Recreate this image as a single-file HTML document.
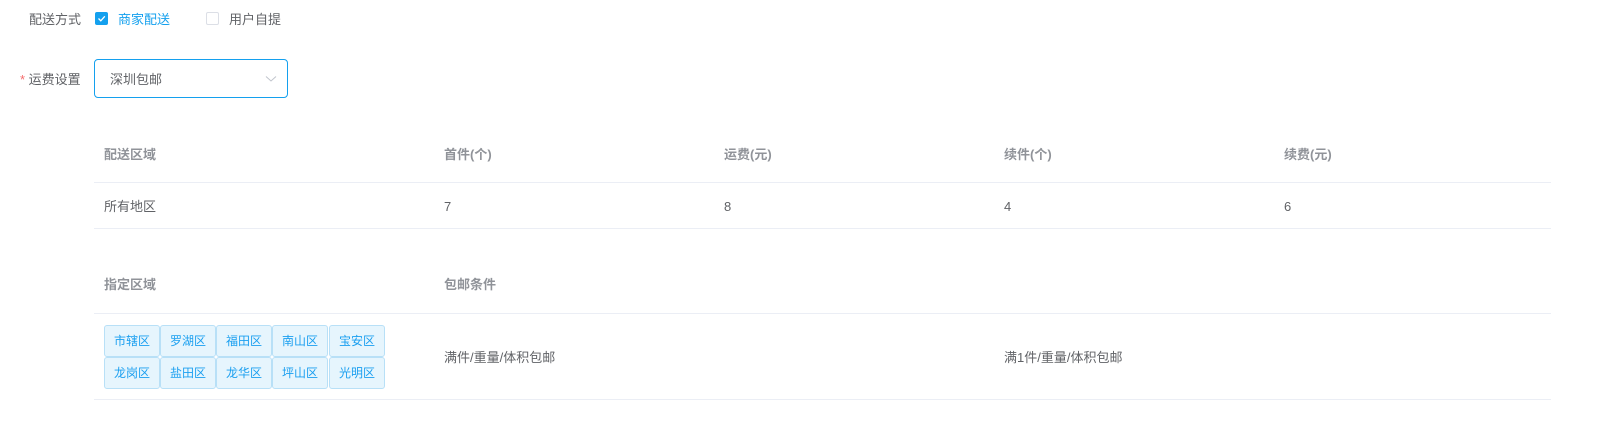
<!DOCTYPE html><html><head><meta charset="utf-8"><style>
body{margin:0;width:1615px;height:426px;background:#fff;font-family:"Liberation Sans","Noto Sans CJK SC",sans-serif;font-size:13px;line-height:16px;color:#606266;position:relative;overflow:hidden}
.a{position:absolute;white-space:nowrap}
.t{margin-top:2px}
.h{color:#909399;font-weight:bold}
.line{position:absolute;left:94px;width:1457px;height:1px;background:#ebeef5}
.tag{position:absolute;width:54px;height:30px;border:1px solid #b8e0f7;background:#e6f5fd;border-radius:3px;color:#1a9ff0;font-size:12px;line-height:30px;text-align:center}
</style></head><body>
<div class="a t" style="left:29px;top:10px">配送方式</div>
<div class="a" style="left:95px;top:12px;width:13px;height:13px;background:#14a0ee;border-radius:2px"><svg width="13" height="13" style="position:absolute;left:0;top:0"><path d="M3.5 6.5 L5.8 8.8 L9.8 4.3" stroke="#fff" stroke-width="1.3" fill="none"/></svg></div>
<div class="a t" style="left:118px;top:10px;color:#14a0ee">商家配送</div>
<div class="a" style="left:206px;top:12px;width:11px;height:11px;border:1px solid #dcdfe6;border-radius:2px"></div>
<div class="a t" style="left:229px;top:10px">用户自提</div>
<div class="a t" style="left:20px;top:70px"><span style="color:#f56c6c">*</span> 运费设置</div>
<div class="a" style="left:94px;top:59px;width:192px;height:37px;border:1px solid #14a0ee;border-radius:4px"></div>
<div class="a t" style="left:110px;top:70px">深圳包邮</div>
<svg class="a" style="left:265px;top:75px" width="12" height="8"><path d="M1 1.5 L6 6 L11 1.5" stroke="#c0c4cc" fill="none"/></svg>
<div class="a h t" style="left:104px;top:145px">配送区域</div>
<div class="a h t" style="left:444px;top:145px">首件(个)</div>
<div class="a h t" style="left:724px;top:145px">运费(元)</div>
<div class="a h t" style="left:1004px;top:145px">续件(个)</div>
<div class="a h t" style="left:1284px;top:145px">续费(元)</div>
<div class="line" style="top:182px"></div>
<div class="a t" style="left:104px;top:197px">所有地区</div>
<div class="a t" style="left:444px;top:197px">7</div>
<div class="a t" style="left:724px;top:197px">8</div>
<div class="a t" style="left:1004px;top:197px">4</div>
<div class="a t" style="left:1284px;top:197px">6</div>
<div class="line" style="top:228px"></div>
<div class="a h t" style="left:104px;top:275px">指定区域</div>
<div class="a h t" style="left:444px;top:275px">包邮条件</div>
<div class="line" style="top:313px"></div>
<div class="tag" style="left:104px;top:325px">市辖区</div>
<div class="tag" style="left:160px;top:325px">罗湖区</div>
<div class="tag" style="left:216px;top:325px">福田区</div>
<div class="tag" style="left:272px;top:325px">南山区</div>
<div class="tag" style="left:329px;top:325px">宝安区</div>
<div class="tag" style="left:104px;top:357px">龙岗区</div>
<div class="tag" style="left:160px;top:357px">盐田区</div>
<div class="tag" style="left:216px;top:357px">龙华区</div>
<div class="tag" style="left:272px;top:357px">坪山区</div>
<div class="tag" style="left:329px;top:357px">光明区</div>
<div class="a t" style="left:444px;top:348px">满件/重量/体积包邮</div>
<div class="a t" style="left:1004px;top:348px">满1件/重量/体积包邮</div>
<div class="line" style="top:399px"></div>
</body></html>
